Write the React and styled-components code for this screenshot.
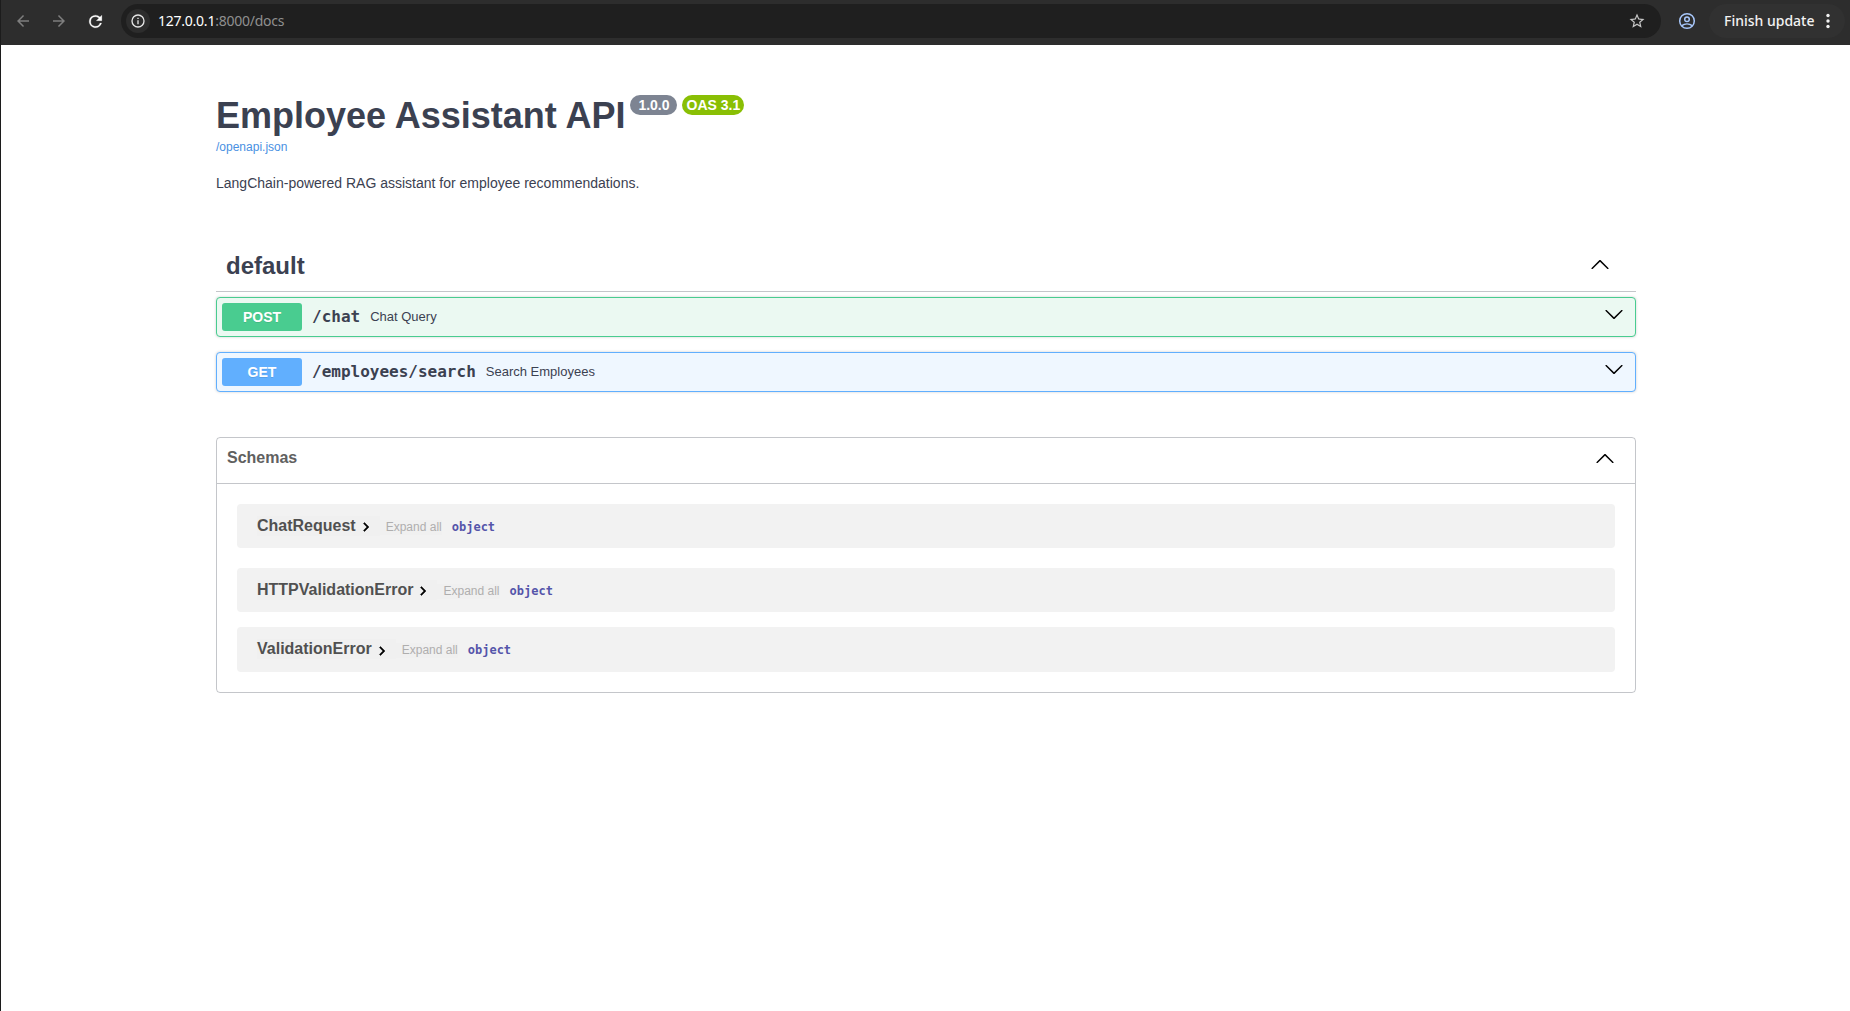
import React from "react";
import styled, { createGlobalStyle } from "styled-components";

const Global = createGlobalStyle`
  * { box-sizing: border-box; }
  body { margin: 0; background: #fff; }
  #root { height: 1011px; }
`;
const sans = `"Liberation Sans", Arial, sans-serif`;
const mono = `"DejaVu Sans Mono", monospace`;

const Window = styled.div`
  height: 1011px; width: 100%; overflow: hidden;
  border-left: 1px solid #1c1c1c; background: #fff;
  font-family: ${sans}; color: #3b4151;
`;
const Toolbar = styled.header`
  height: 45px; background: #2d2d2d; display: flex; align-items: flex-start;
  padding: 4px 5px 0 4px; font-family: "Noto Sans", sans-serif;
`;
const NavButton = styled.button`
  width: 36px; height: 34px; padding: 0; border: 0; background: none;
  color: ${(p) => (p.$active ? "#fff" : "#7e7e7e")};
  display: flex; align-items: center; justify-content: center;
`;
const Address = styled.div`
  flex: 1; height: 34px; border-radius: 17px; background: #1f1f1f; margin-left: 8px;
  display: flex; align-items: center; padding: 0 15px 0 5px;
`;
const SiteInfo = styled.span`
  width: 24px; height: 24px; border-radius: 50%; background: #2d2d2d; color: #e6e6e6;
  display: flex; align-items: center; justify-content: center;
`;
const Url = styled.span`
  flex: 1; margin-left: 8px; font-size: 14px; line-height: 20px; letter-spacing: -0.24px; color: #8f8f8f;
  b { font-weight: 400; color: #fff; }
`;
const Profile = styled.span`
  width: 48px; height: 34px; padding-left: 4px; display: flex; align-items: center; justify-content: center; color: #a8c7fa;
`;
const Update = styled.button`
  width: 136px; height: 34px; border: 0; border-radius: 17px; background: #313131; color: #f2f2f2;
  font: 500 14px/20px "Noto Sans", sans-serif; letter-spacing: 0; padding: 0 10px 0 15px; white-space: nowrap;
  display: flex; align-items: center; justify-content: space-between;
`;

const Page = styled.main`
  width: 1420px; margin: 0 0 0 215px; padding-top: 50px;
`;
const Title = styled.h1`
  margin: 0; font-size: 36px; line-height: 41px; font-weight: 700; display: flex; align-items: flex-start;
`;
const Badge = styled.span`
  height: 20px; border-radius: 20px; background: ${(p) => p.$bg}; color: #fff;
  font-size: 14px; line-height: 20px; font-weight: 700; text-align: center;
  width: ${(p) => p.$w}px; margin-left: 5px;
`;
const SpecLink = styled.a`
  display: block; margin-top: 3px; font-size: 12px; line-height: 16px; color: #4990e2;
`;
const Description = styled.p`
  margin: 20px 0 0; font-size: 14px; line-height: 17px;
`;
const TagHeader = styled.h3`
  margin: 48px 0 5px; height: 52px; padding: 0 26px 0 10px; font-size: 24px; line-height: 52px;
  border-bottom: 1px solid rgba(59, 65, 81, 0.3);
  display: flex; align-items: flex-start; justify-content: space-between;
`;
const ArrowSvg = styled.svg`
  width: 20px; height: 20px; display: block; flex: none; fill: #000;
  margin-top: ${(p) => p.$top}px;
  transform: ${(p) => (p.$down ? "rotate(180deg)" : "none")};
`;
const Operation = styled.div`
  height: 40px; margin-bottom: 15px; padding: 5px 11px 5px 5px; border: 1px solid ${(p) => p.$color};
  border-radius: 4px; background: ${(p) => p.$bg}; box-shadow: 0 0 3px rgba(0, 0, 0, 0.19);
  display: flex; align-items: flex-start;
`;
const Method = styled.span`
  width: 80px; height: 28px; border-radius: 3px; background: ${(p) => p.$color}; color: #fff;
  font-size: 14px; line-height: 28px; font-weight: 700; text-align: center;
  text-shadow: 0 1px 0 rgba(0, 0, 0, 0.1);
`;
const Path = styled.span`
  margin-left: 10px; font: 600 16px/28px ${mono};
`;
const Summary = styled.span`
  flex: 1; margin-left: 10px; font-size: 13px; line-height: 28px;
`;
const Schemas = styled.section`
  margin-top: 45px; height: 256px; border: 1px solid rgba(59, 65, 81, 0.3); border-radius: 4px;
`;
const SchemasHeader = styled.h4`
  margin: 0 0 20px; height: 46px; padding: 0 20px 0 10px; font-size: 16px; line-height: 40px; color: #606060;
  border-bottom: 1px solid rgba(59, 65, 81, 0.3);
  display: flex; align-items: flex-start; justify-content: space-between;
`;
const Model = styled.div`
  height: ${(p) => p.$h}px; margin: 0 20px ${(p) => p.$gap}px; padding: 12px 20px 0; border-radius: 4px;
  background: #f2f2f2; display: flex; align-items: flex-start;
`;
const ModelName = styled.span`
  height: 20px; background: #f0f0f0; color: #505050; font-size: 16px; font-weight: 700; line-height: 19px;
  padding-right: 5px; display: flex; align-items: flex-start;
`;
const Chevron = styled.svg`
  width: 18px; height: 18px; margin: ${(p) => p.$top}px 0 0 1px; fill: #000; stroke: #000; stroke-width: 0.6px;
`;
const Expand = styled.span`
  margin-top: 4px; height: 15px; padding: 0 0 0 6px; background: #f0f0f0; color: #afaeae; font-size: 12px; line-height: 14px;
`;
const Type = styled.span`
  margin: 3px 0 0 10px; font: 700 12px/17px ${mono}; color: #5555aa;
`;

const Arrow = ({ down, top }) => (
  <ArrowSvg viewBox="0 0 20 20" $down={down} $top={top}>
    <path d="M17.418 14.908C17.69 15.176 18.127 15.176 18.397 14.908C18.667 14.64 18.668 14.207 18.397 13.939L10.489 6.109C10.219 5.841 9.782 5.841 9.51 6.109L1.602 13.939C1.332 14.207 1.332 14.64 1.602 14.908C1.873 15.176 2.311 15.176 2.581 14.908L10 7.767Z" />
  </ArrowSvg>
);

const operations = [
  { method: "POST", path: "/chat", summary: "Chat Query", color: "#49cc90", bg: "#ebf9f2" },
  { method: "GET", path: "/employees/search", summary: "Search Employees", color: "#61affe", bg: "#eff7ff" },
];
const models = [
  { name: "ChatRequest", h: 44, gap: 20, top: 2 },
  { name: "HTTPValidationError", h: 44, gap: 15, top: 2 },
  { name: "ValidationError", h: 45, gap: 0, top: 3 },
];

export default function App() {
  return (
    <Window>
      <Global />
      <Toolbar>
        <NavButton aria-label="Back">
          <svg width="18" height="18" viewBox="0 0 24 24" fill="currentColor"><path d="M20 11H7.83l5.59-5.59L12 4l-8 8 8 8 1.41-1.41L7.83 13H20z" /></svg>
        </NavButton>
        <NavButton aria-label="Forward">
          <svg width="18" height="18" viewBox="0 0 24 24" fill="currentColor"><path d="M12 4l-1.41 1.41L16.17 11H4v2h12.17l-5.58 5.59L12 20l8-8z" /></svg>
        </NavButton>
        <NavButton aria-label="Reload" $active>
          <svg width="19" height="19" viewBox="0 0 24 24" fill="currentColor" stroke="currentColor" strokeWidth="0.3"><path d="M17.65 6.35A7.96 7.96 0 0 0 12 4a8 8 0 1 0 7.73 10h-2.08A6 6 0 1 1 12 6c1.66 0 3.14.69 4.22 1.78L13 11h7V4z" /></svg>
        </NavButton>
        <Address>
          <SiteInfo>
            <svg width="16" height="16" viewBox="0 0 24 24" fill="currentColor"><path d="M11 17h2v-6h-2zm0-8h2V7h-2zm1-7a10 10 0 1 0 0 20 10 10 0 0 0 0-20zm0 18a8 8 0 1 1 0-16 8 8 0 0 1 0 16z" /></svg>
          </SiteInfo>
          <Url><b>127.0.0.1</b>:8000/docs</Url>
          <svg width="18" height="18" viewBox="0 0 24 24" fill="#c7c7c7"><path d="M22 9.24l-7.19-.62L12 2 9.19 8.63 2 9.24l5.46 4.73L5.82 21 12 17.27 18.18 21l-1.63-7.03zM12 15.4l-3.76 2.27 1-4.28-3.32-2.88 4.38-.38L12 6.1l1.71 4.04 4.38.38-3.32 2.88 1 4.28z" /></svg>
        </Address>
        <Profile>
          <svg width="18" height="18" viewBox="0 0 18 18" fill="none" stroke="currentColor" strokeWidth="1.5"><circle cx="9" cy="9" r="7.3" /><circle cx="9" cy="7.2" r="2.3" /><path d="M3.8 13.6c3-2.3 7.4-2.3 10.4 0" /></svg>
        </Profile>
        <Update>
          Finish update
          <svg width="14" height="16" viewBox="0 0 14 16" fill="currentColor"><circle cx="7" cy="2.5" r="1.7" /><circle cx="7" cy="8" r="1.7" /><circle cx="7" cy="13.5" r="1.7" /></svg>
        </Update>
      </Toolbar>
      <Page>
        <Title>
          Employee Assistant API
          <Badge $bg="#7d8492" $w={47}>1.0.0</Badge>
          <Badge $bg="#89bf04" $w={62}>OAS 3.1</Badge>
        </Title>
        <SpecLink>/openapi.json</SpecLink>
        <Description>LangChain-powered RAG assistant for employee recommendations.</Description>
        <TagHeader>default<Arrow top={14} /></TagHeader>
        {operations.map((o) => (
          <Operation key={o.path} $color={o.color} $bg={o.bg}>
            <Method $color={o.color}>{o.method}</Method>
            <Path>{o.path}</Path>
            <Summary>{o.summary}</Summary>
            <Arrow down top={2} />
          </Operation>
        ))}
        <Schemas>
          <SchemasHeader>Schemas<Arrow top={10} /></SchemasHeader>
          {models.map((m) => (
            <Model key={m.name} $h={m.h} $gap={m.gap}>
              <ModelName>
                {m.name}
                <Chevron viewBox="0 0 24 24" $top={m.top}><path d="M10 6L8.59 7.41 13.17 12l-4.58 4.59L10 18l6-6z" /></Chevron>
              </ModelName>
              <Expand>Expand all</Expand>
              <Type>object</Type>
            </Model>
          ))}
        </Schemas>
      </Page>
    </Window>
  );
}
